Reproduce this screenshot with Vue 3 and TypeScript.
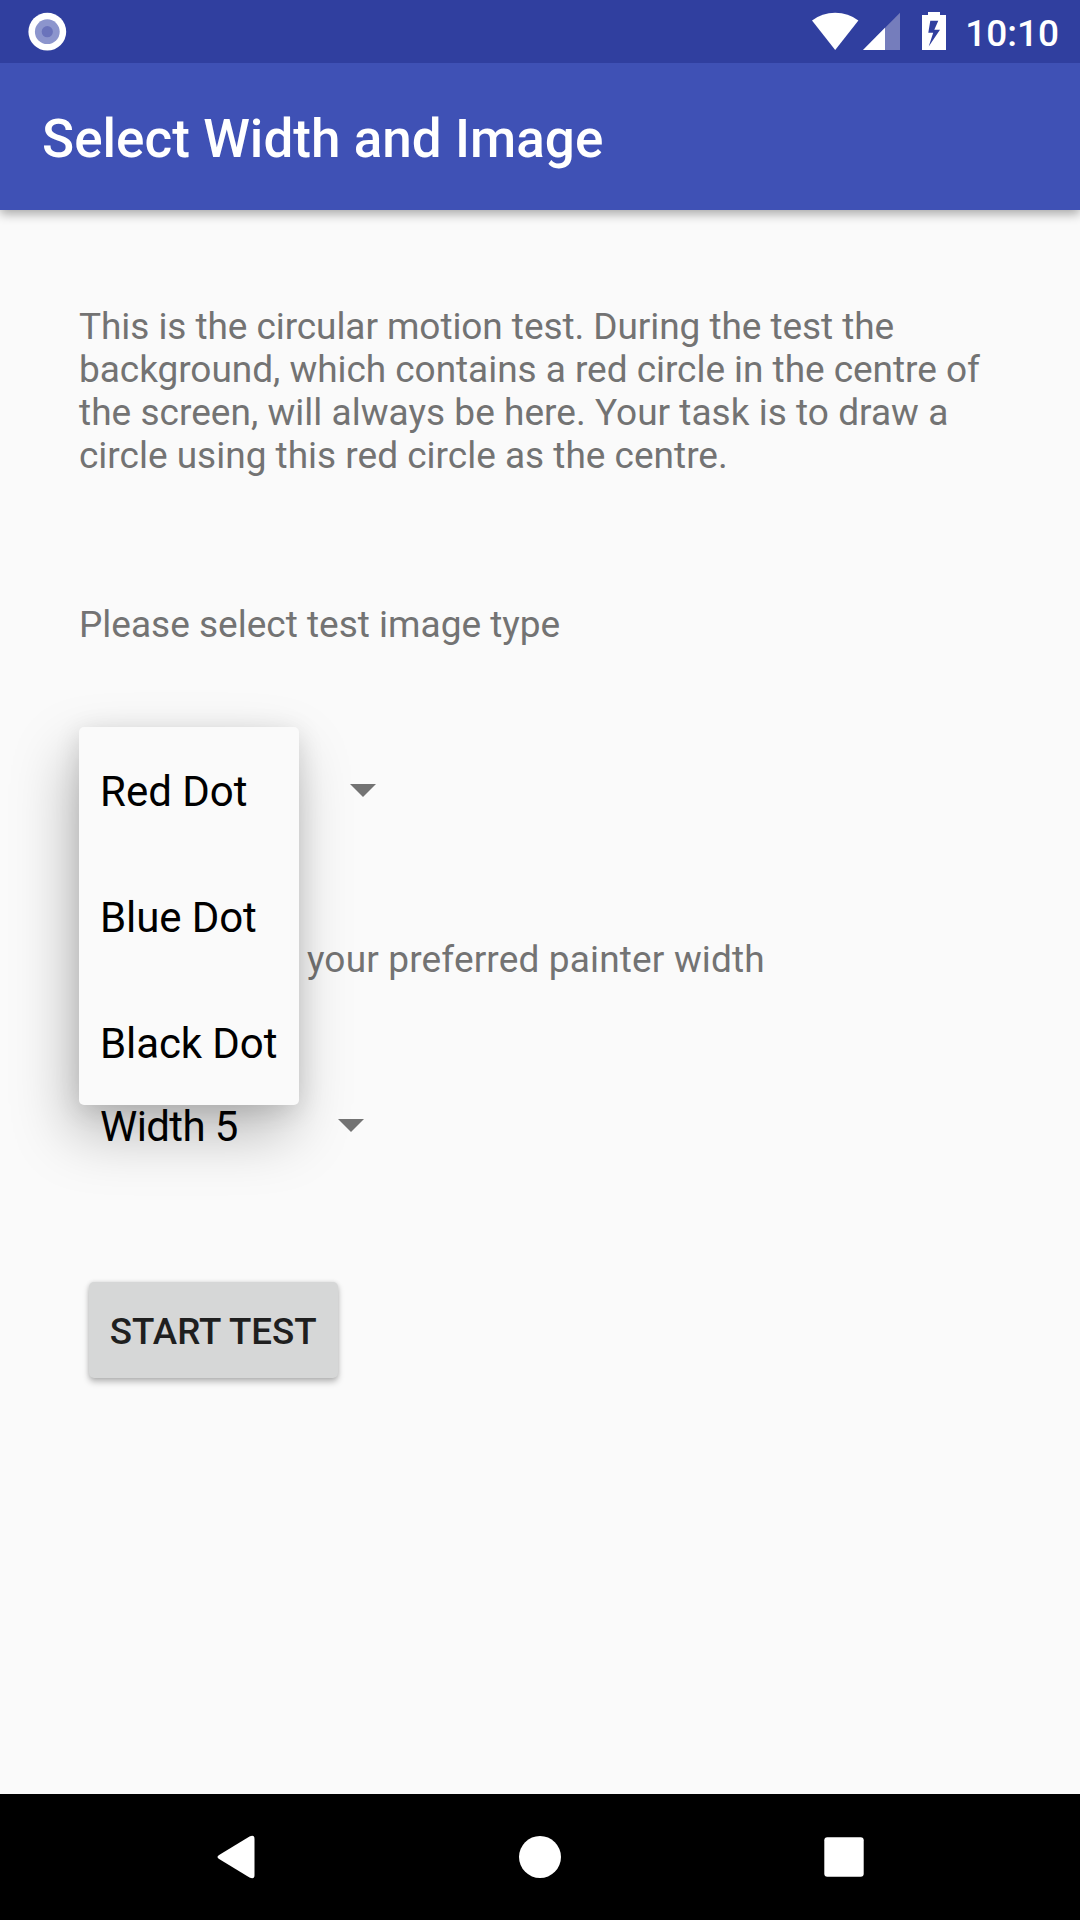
<script setup lang="ts">
import { ref } from 'vue'

const imageTypes: string[] = ['Red Dot', 'Blue Dot', 'Black Dot']
const imageType = ref<string>(imageTypes[0])
const menuOpen = ref<boolean>(true)
const painterWidth = ref<string>('Width 5')

function choose(type: string): void {
  imageType.value = type
  menuOpen.value = false
}
</script>

<template>
  <div class="screen">
    <header class="status">
      <svg class="record" width="40" height="40" viewBox="0 0 40 40">
        <circle cx="20.3" cy="19.7" r="18.9" fill="#fff" />
        <circle cx="20.3" cy="19.7" r="12.4" fill="#8c95cd" />
        <circle cx="20.3" cy="19.7" r="5.6" fill="#6a73bb" />
      </svg>
      <div class="tray">
        <svg width="88" height="38" viewBox="0 0 88 38">
          <path d="M0 8.6Q10 0.8 23.2 0.8T46.4 8.6L23.2 38Z" fill="#fff" />
          <path d="M88 0.8V38H51Z" fill="#757dbc" />
          <path d="M73 15.8V38H51Z" fill="#fff" />
        </svg>
        <svg class="battery" width="24" height="38" viewBox="0 0 24 38">
          <path fill="#fff" fill-rule="evenodd" d="M6 0H18V3H24V38H0V3H6ZM8.3 8.8L6.3 20.8H11.2L6.7 34.6L18 17.8H12.3L16.3 8.8Z" />
        </svg>
        <span class="clock">10:10</span>
      </div>
    </header>
    <div class="toolbar"><h1>Select Width and Image</h1></div>

    <main>
      <p class="intro">
        <span class="tight">This is the circular motion test. During the test the</span>
        <span class="snug">background, which contains a red circle in the centre of</span>
        <span class="loose">the screen, will always be here. Your task is to draw a</span>
        <span>circle using this red circle as the centre.</span>
      </p>
      <p class="label type-label">Please select test image type</p>
      <div class="spinner type-spinner" @click="menuOpen = true">
        <span v-if="!menuOpen">{{ imageType }}</span>
        <svg class="arrow" width="26" height="13" viewBox="0 0 26 13"><path d="M0 0H26L13 13Z" /></svg>
        <ul v-if="menuOpen" class="menu">
          <li v-for="type in imageTypes" :key="type" @click.stop="choose(type)">{{ type }}</li>
        </ul>
      </div>
      <p class="label">Please select <span class="wide">your preferred painter width</span></p>
      <div class="spinner width-spinner">
        <span>{{ painterWidth }}</span>
        <svg class="arrow" width="26" height="13" viewBox="0 0 26 13"><path d="M0 0H26L13 13Z" /></svg>
      </div>
      <button type="button">START TEST</button>
    </main>

    <nav>
      <svg width="38" height="44" viewBox="0 0 38 44"><path d="M2.1 20L32.5 1.6Q37.5 -.8 37.5 4V40Q37.5 44.8 32.5 42.4L2.1 24Q-1.1 22 2.1 20Z" fill="#fff" /></svg>
      <svg width="42" height="42" viewBox="0 0 42 42"><circle cx="21" cy="21" r="21" fill="#fff" /></svg>
      <svg width="40" height="40" viewBox="0 0 40 40"><rect x=".3" y=".3" width="39.4" height="39.4" rx="3" fill="#fff" /></svg>
    </nav>
  </div>
</template>

<style>
body {
  margin: 0;
  background: #fafafa;
}
</style>

<style scoped>
.screen {
  width: 1080px;
  height: 1920px;
  display: flex;
  flex-direction: column;
  overflow: hidden;
  background: #fafafa;
  font-family: Roboto, sans-serif;
}
.status {
  position: relative;
  z-index: 1;
  height: 63px;
  flex: none;
  display: flex;
  justify-content: space-between;
  background: #303f9f;
}
svg {
  display: block;
  flex: none;
}
.record {
  margin: 11.5px 0 0 27.4px;
}
.tray {
  display: flex;
  align-items: flex-start;
  padding: 12px 21px 0 0;
}
.battery {
  margin-left: 22px;
}
.clock {
  margin-left: 19.5px;
  font-size: 37px;
  font-weight: 500;
  line-height: 43px;
  color: #fff;
}
.toolbar {
  height: 147px;
  flex: none;
  display: flex;
  align-items: center;
  box-sizing: border-box;
  padding: 5px 0 0 42px;
  background: #3f51b5;
  box-shadow: 0 4px 10px rgba(0, 0, 0, 0.33);
}
h1 {
  margin: 0;
  font-size: 53px;
  font-weight: 500;
  line-height: 62px;
  letter-spacing: 0.04px;
  color: #fff;
}
main {
  flex: 1;
  padding: 95px 79px 0;
}
p {
  margin: 0;
  font-size: 37px;
  line-height: 43px;
  white-space: nowrap;
  color: #737373;
}
.intro span {
  display: block;
}
.intro .tight {
  letter-spacing: -0.07px;
}
.intro .snug {
  letter-spacing: -0.04px;
}
.intro .loose {
  letter-spacing: 0.03px;
}
.type-label {
  margin-top: 126px;
}
.wide {
  letter-spacing: 0.16px;
}
.spinner {
  position: relative;
  display: flex;
  align-items: center;
  height: 126px;
  box-sizing: border-box;
  padding-left: 21px;
  font-size: 42px;
  color: #000;
}
.arrow {
  margin-left: auto;
  fill: #737373;
}
.type-spinner {
  width: 296.6px;
  margin: 81px 0 85px;
}
.width-spinner {
  width: 284.6px;
  margin: 81px 0 94px;
}
.width-spinner span {
  padding-top: 3px;
  letter-spacing: -0.6px;
}
.menu {
  position: absolute;
  left: 0;
  top: 0;
  width: 220px;
  margin: 0;
  padding: 0;
  list-style: none;
  border-radius: 5px;
  background: #fafafa;
  box-shadow: -8px 28px 60px rgba(0, 0, 0, 0.26), 0 5px 26px rgba(0, 0, 0, 0.12);
}
.menu li {
  height: 126px;
  box-sizing: border-box;
  padding: 3px 0 0 21px;
  line-height: 123px;
  letter-spacing: -0.1px;
}
.menu li:first-child {
  letter-spacing: 0;
}
button {
  display: block;
  width: 248.6px;
  height: 96px;
  margin-left: 10px;
  padding: 2px 0 0;
  border: 0;
  border-radius: 5px;
  background: #d6d7d7;
  box-shadow: 0 4px 6px rgba(0, 0, 0, 0.25), 0 0 4px rgba(0, 0, 0, 0.12);
  font-family: inherit;
  font-size: 36.75px;
  font-weight: 500;
  line-height: 43px;
  white-space: nowrap;
  color: #1f1f1f;
}
nav {
  height: 126px;
  flex: none;
  display: flex;
  align-items: center;
  justify-content: space-between;
  box-sizing: border-box;
  padding: 0 216px 0 217px;
  background: #000;
}
</style>
